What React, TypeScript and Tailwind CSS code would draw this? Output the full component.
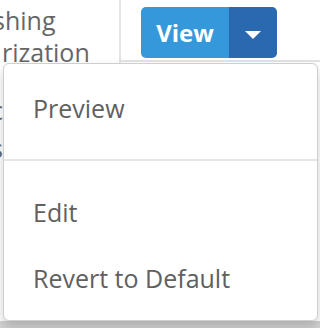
import React from "react";

export default function App() {
  const font = { fontFamily: '"Open Sans", "Liberation Sans", sans-serif' };
  return (
    <div
      className="relative w-[320px] h-[328px] overflow-hidden bg-white flex flex-col"
      style={font}
    >
      {/* background table */}
      <div className="flex h-[321px] shrink-0">
        <div className="w-[121px] shrink-0 border-r-2 border-[#e3e3e3] text-[25px] leading-[32px] text-[#666] pt-[4px] whitespace-nowrap overflow-hidden">
          <div className="ml-[-7px]">shing</div>
          <div className="ml-[2px]">rization</div>
          <div className="ml-[-9px] mt-[26px]">c</div>
          <div className="ml-[-9px] mt-[6px]">s</div>
        </div>
        <div className="flex-1">
          <div className="h-[62px] border-b-2 border-[#e3e3e3] pl-[20px] pt-[7px]">
            <div className="flex h-[51px] w-[136px] rounded-[5px] overflow-hidden">
              <div className="w-[88px] bg-[#3498db] flex items-center justify-center text-white font-bold text-[24px]">
                View
              </div>
              <div className="w-[48px] bg-[#2a69af] flex items-center justify-center pt-[5px]">
                <svg width="16" height="8" viewBox="0 0 16 8">
                  <path d="M0 0 L16 0 L8 8 Z" fill="#fff" />
                </svg>
              </div>
            </div>
          </div>
        </div>
      </div>
      <div className="flex-1 bg-[#d3d3d3]" />

      {/* dropdown menu */}
      <div className="absolute left-[3px] top-[63px] w-[315px] h-[258px] bg-white border border-[#cfcfcf] rounded-[6px] shadow-[0_6px_12px_rgba(0,0,0,0.18)] pt-[12px] text-[25px] text-[#606060]">
        <div className="h-[66px] flex items-center px-[29px]">Preview</div>
        <div className="mt-[17px] mb-[19px] h-[2px] bg-[#e5e5e5]" />
        <div className="h-[66px] flex items-center px-[29px]">Edit</div>
        <div className="h-[66px] flex items-center px-[29px]">Revert to Default</div>
      </div>
    </div>
  );
}
